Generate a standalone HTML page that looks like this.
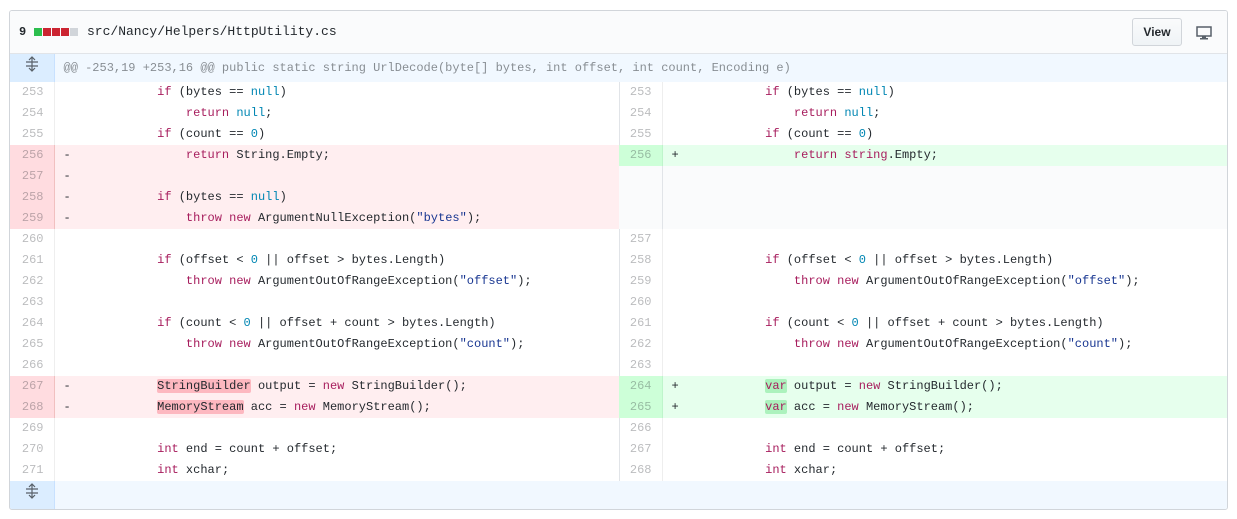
<!DOCTYPE html>
<html><head><meta charset="utf-8"><style>
body{margin:0;background:#fff;font-family:"Liberation Sans",sans-serif;}
.box{position:absolute;left:9px;top:10px;width:1217px;height:498px;border:1px solid #d1d5da;border-radius:3px;overflow:hidden;}
.hdr{height:42px;background:#fafbfc;border-bottom:1px solid #e1e4e8;position:relative;}
.hdr .n{position:absolute;left:9px;top:14px;font:bold 12px "Liberation Mono",monospace;color:#24292e;}
.bars{position:absolute;left:24px;top:17px;}
.bars span{display:inline-block;width:8px;height:8px;margin-right:1px;float:left;}
.path{position:absolute;left:77px;top:13px;font:13px "Liberation Mono",monospace;color:#24292e;}
.btn{position:absolute;left:1122px;top:7px;width:48px;height:26px;border:1px solid #d1d5da;border-radius:3px;background:linear-gradient(#fafbfc,#eff3f6);font:bold 12px "Liberation Sans",sans-serif;color:#24292e;text-align:center;line-height:26px;}
.mon{position:absolute;left:1186px;top:15px;}
table{border-collapse:collapse;font:12px/21px "Liberation Mono",monospace;table-layout:fixed;width:1217px;}
td{padding:0;height:21px;white-space:pre;overflow:hidden;}
td.num{width:44px;text-align:right;padding-right:10px;box-sizing:border-box;color:rgba(27,31,35,.3);border-right:1px solid #eee;}
td.code{padding-left:9px;color:#24292e;}
tr.hunk td{height:28px;background:#f1f8ff;color:rgba(27,31,35,.5);}
tr.hunk td.num{background:#dbedff;border-right:1px solid #c8e1ff;text-align:center;padding:0;}
.d{background:#ffeef0}.dn{background:#ffdce0 !important;border-right-color:#f1c0c0 !important}
.a{background:#e6ffed}.an{background:#cdffd8 !important;border-right-color:#bef5cb !important}
.e{background:#fafbfc}
.k{color:#a71d5d}.c{color:#0086b3}.s{color:#183691}
.xd{background:#fdb8c0;border-radius:2px}.xa{background:#acf2bd;border-radius:2px}
.sep{border-left:1px solid #e1e4e8}
</style></head><body>
<div class="box">
<div class="hdr"><span class="n">9</span>
<span class="bars"><span style="background:#2cbe4e"></span><span style="background:#cb2431"></span><span style="background:#cb2431"></span><span style="background:#cb2431"></span><span style="background:#d1d5da"></span></span>
<span class="path">src/Nancy/Helpers/HttpUtility.cs</span>
<div class="btn">View</div>
<svg class="mon" width="16" height="14" viewBox="0 0 16 14"><rect x="1" y="1" width="14" height="9" fill="none" stroke="#586069" stroke-width="1.5"/><rect x="6" y="10" width="4" height="2" fill="#586069"/><rect x="4" y="12" width="8" height="1.5" fill="#586069"/></svg>
</div>
<table>
<colgroup><col style="width:44px"><col style="width:565px"><col style="width:43px"><col style="width:565px"></colgroup>
<tr class="hunk"><td class="num"><svg width="14" height="16" viewBox="0 0 14 16"><path d="M7 1v14M4 4l3-3 3 3M4 12l3 3 3-3M1 6h12M1 10h12" stroke="#586069" fill="none" stroke-width="1.2"/></svg></td><td class="code" colspan="3">@@ -253,19 +253,16 @@ public static string UrlDecode(byte[] bytes, int offset, int count, Encoding e)</td></tr>
<tr><td class="num">253</td><td class="code">             <span class="k">if</span> (bytes == <span class="c">null</span>)</td><td class="num sep">253</td><td class="code">             <span class="k">if</span> (bytes == <span class="c">null</span>)</td></tr>
<tr><td class="num">254</td><td class="code">                 <span class="k">return</span> <span class="c">null</span>;</td><td class="num sep">254</td><td class="code">                 <span class="k">return</span> <span class="c">null</span>;</td></tr>
<tr><td class="num">255</td><td class="code">             <span class="k">if</span> (count == <span class="c">0</span>)</td><td class="num sep">255</td><td class="code">             <span class="k">if</span> (count == <span class="c">0</span>)</td></tr>
<tr><td class="num dn">256</td><td class="code d">-                <span class="k">return</span> String.Empty;</td><td class="num an">256</td><td class="code a">+                <span class="k">return</span> <span class="k">string</span>.Empty;</td></tr>
<tr><td class="num dn">257</td><td class="code d">-</td><td class="num e" style="border-right-color:#e1e4e8"></td><td class="code e"></td></tr>
<tr><td class="num dn">258</td><td class="code d">-            <span class="k">if</span> (bytes == <span class="c">null</span>)</td><td class="num e" style="border-right-color:#e1e4e8"></td><td class="code e"></td></tr>
<tr><td class="num dn">259</td><td class="code d">-                <span class="k">throw</span> <span class="k">new</span> ArgumentNullException(<span class="s">"bytes"</span>);</td><td class="num e" style="border-right-color:#e1e4e8"></td><td class="code e"></td></tr>
<tr><td class="num">260</td><td class="code"></td><td class="num sep">257</td><td class="code"></td></tr>
<tr><td class="num">261</td><td class="code">             <span class="k">if</span> (offset &lt; <span class="c">0</span> || offset &gt; bytes.Length)</td><td class="num sep">258</td><td class="code">             <span class="k">if</span> (offset &lt; <span class="c">0</span> || offset &gt; bytes.Length)</td></tr>
<tr><td class="num">262</td><td class="code">                 <span class="k">throw</span> <span class="k">new</span> ArgumentOutOfRangeException(<span class="s">"offset"</span>);</td><td class="num sep">259</td><td class="code">                 <span class="k">throw</span> <span class="k">new</span> ArgumentOutOfRangeException(<span class="s">"offset"</span>);</td></tr>
<tr><td class="num">263</td><td class="code"></td><td class="num sep">260</td><td class="code"></td></tr>
<tr><td class="num">264</td><td class="code">             <span class="k">if</span> (count &lt; <span class="c">0</span> || offset + count &gt; bytes.Length)</td><td class="num sep">261</td><td class="code">             <span class="k">if</span> (count &lt; <span class="c">0</span> || offset + count &gt; bytes.Length)</td></tr>
<tr><td class="num">265</td><td class="code">                 <span class="k">throw</span> <span class="k">new</span> ArgumentOutOfRangeException(<span class="s">"count"</span>);</td><td class="num sep">262</td><td class="code">                 <span class="k">throw</span> <span class="k">new</span> ArgumentOutOfRangeException(<span class="s">"count"</span>);</td></tr>
<tr><td class="num">266</td><td class="code"></td><td class="num sep">263</td><td class="code"></td></tr>
<tr><td class="num dn">267</td><td class="code d">-            <span class="xd">StringBuilder</span> output = <span class="k">new</span> StringBuilder();</td><td class="num an">264</td><td class="code a">+            <span class="xa k">var</span> output = <span class="k">new</span> StringBuilder();</td></tr>
<tr><td class="num dn">268</td><td class="code d">-            <span class="xd">MemoryStream</span> acc = <span class="k">new</span> MemoryStream();</td><td class="num an">265</td><td class="code a">+            <span class="xa k">var</span> acc = <span class="k">new</span> MemoryStream();</td></tr>
<tr><td class="num">269</td><td class="code"></td><td class="num sep">266</td><td class="code"></td></tr>
<tr><td class="num">270</td><td class="code">             <span class="k">int</span> end = count + offset;</td><td class="num sep">267</td><td class="code">             <span class="k">int</span> end = count + offset;</td></tr>
<tr><td class="num">271</td><td class="code">             <span class="k">int</span> xchar;</td><td class="num sep">268</td><td class="code">             <span class="k">int</span> xchar;</td></tr>
<tr class="hunk"><td class="num"><svg width="14" height="16" viewBox="0 0 14 16"><path d="M7 1v14M4 4l3-3 3 3M4 12l3 3 3-3M1 6h12M1 10h12" stroke="#586069" fill="none" stroke-width="1.2"/></svg></td><td class="code" colspan="3"></td></tr>
</table>
</div>
</body></html>
